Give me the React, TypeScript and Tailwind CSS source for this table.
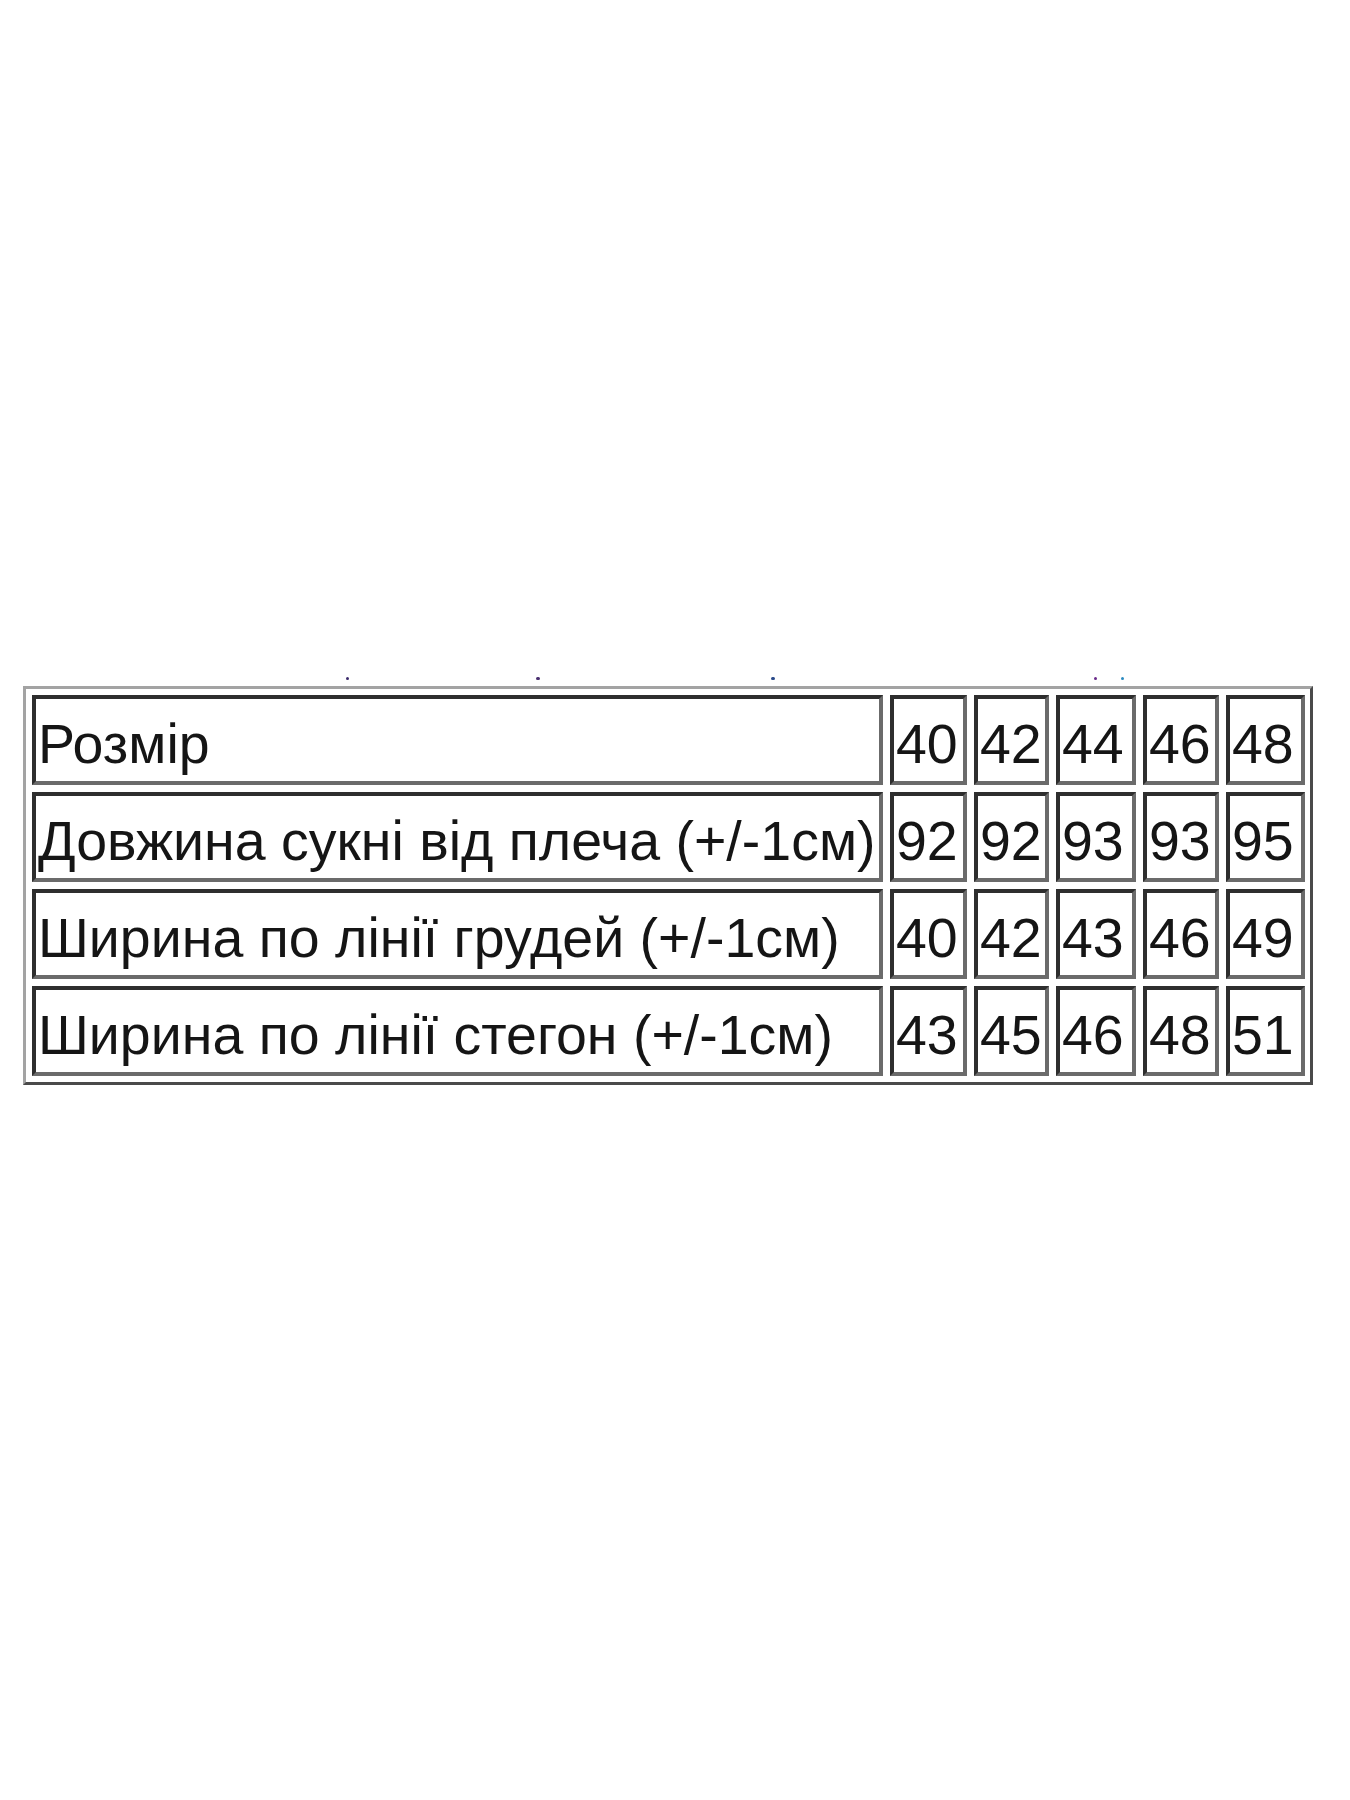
import React from "react";

const rows: { label: string; values: string[] }[] = [
  { label: "Розмір", values: ["40", "42", "44", "46", "48"] },
  { label: "Довжина сукні від плеча (+/-1см)", values: ["92", "92", "93", "93", "95"] },
  { label: "Ширина по лінії грудей (+/-1см)", values: ["40", "42", "43", "46", "49"] },
  { label: "Ширина по лінії стегон (+/-1см)", values: ["43", "45", "46", "48", "51"] },
];

function Cell({ children }: { children: React.ReactNode }) {
  return (
    <div className="flex h-[90px] items-center overflow-hidden whitespace-nowrap border-[4px] border-t-[#2e2e2e] border-l-[#2e2e2e] border-r-[#6b6b6b] border-b-[#6b6b6b] bg-white pt-[8px] pl-[2px] text-[55.5px] leading-[64px] text-[#151515]">
      {children}
    </div>
  );
}

export default function App() {
  return (
    <div
      className="min-h-[1800px] w-[1350px] bg-white pt-[677px]"
      style={{ fontFamily: '"Liberation Sans", Arial, sans-serif' }}
    >
      {/* specks of cropped text above the table */}
      <div className="flex h-[3px] items-start">
        <span className="ml-[346px] h-[3px] w-[3px] rounded-full bg-[#3b2a6b]" />
        <span className="ml-[187px] h-[3px] w-[4px] rounded-full bg-[#4a3070]" />
        <span className="ml-[231px] h-[3px] w-[4px] rounded-full bg-[#2a4a8a]" />
        <span className="ml-[319px] h-[3px] w-[3px] rounded-full bg-[#6a2a8a]" />
        <span className="ml-[24px] h-[3px] w-[3px] rounded-full bg-[#2a8ac0]" />
      </div>

      <div className="ml-[23px] mt-[6px] w-[1290px] border-[3px] border-t-[#a3a3a3] border-l-[#a3a3a3] border-r-[#4a4a4a] border-b-[#4a4a4a] p-[6px]">
        <div className="grid grid-cols-[851px_77px_75px_80px_76px_79px] gap-[7px]">
          {rows.map((row) => (
            <React.Fragment key={row.label}>
              <Cell>{row.label}</Cell>
              {row.values.map((v, i) => (
                <Cell key={i}>{v}</Cell>
              ))}
            </React.Fragment>
          ))}
        </div>
      </div>
    </div>
  );
}
